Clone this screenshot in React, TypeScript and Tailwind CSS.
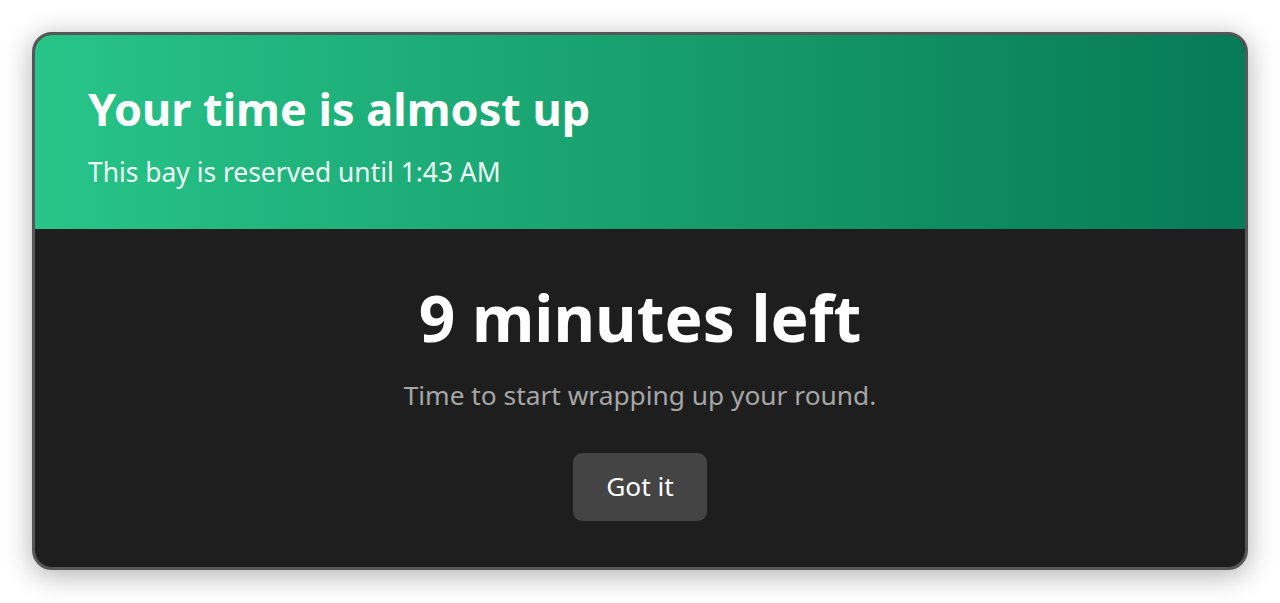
export default function App() {
  return (
    <div className="min-h-screen bg-white p-8 font-['Noto_Sans',sans-serif]">
      <div className="overflow-hidden rounded-[20px] border-[3px] border-[#575757] bg-[#1e1e1e] shadow-[0_5px_28px_rgba(0,0,0,0.32)]">
        <div className="h-[194px] bg-gradient-to-r from-[#27c589] to-[#067b55] px-[53px] pt-[44px]">
          <h1 className="text-[45px] font-bold leading-[60px] text-white">
            Your time is almost up
          </h1>
          <p className="mt-[16px] text-[26.4px] leading-[34px] text-[#eefbf5]">
            This bay is reserved until 1:43 AM
          </p>
        </div>
        <div className="flex h-[338px] flex-col items-center pt-[49px]">
          <h2 className="text-[64px] font-bold leading-[80px] text-white">
            9 minutes left
          </h2>
          <p className="mt-[20px] text-[26.3px] leading-[34px] text-[#a6a6a6]">
            Time to start wrapping up your round.
          </p>
          <button className="mt-[41px] h-[68px] w-[134px] rounded-[9px] bg-[#444444] text-[26.3px] text-white">
            Got it
          </button>
        </div>
      </div>
    </div>
  );
}
